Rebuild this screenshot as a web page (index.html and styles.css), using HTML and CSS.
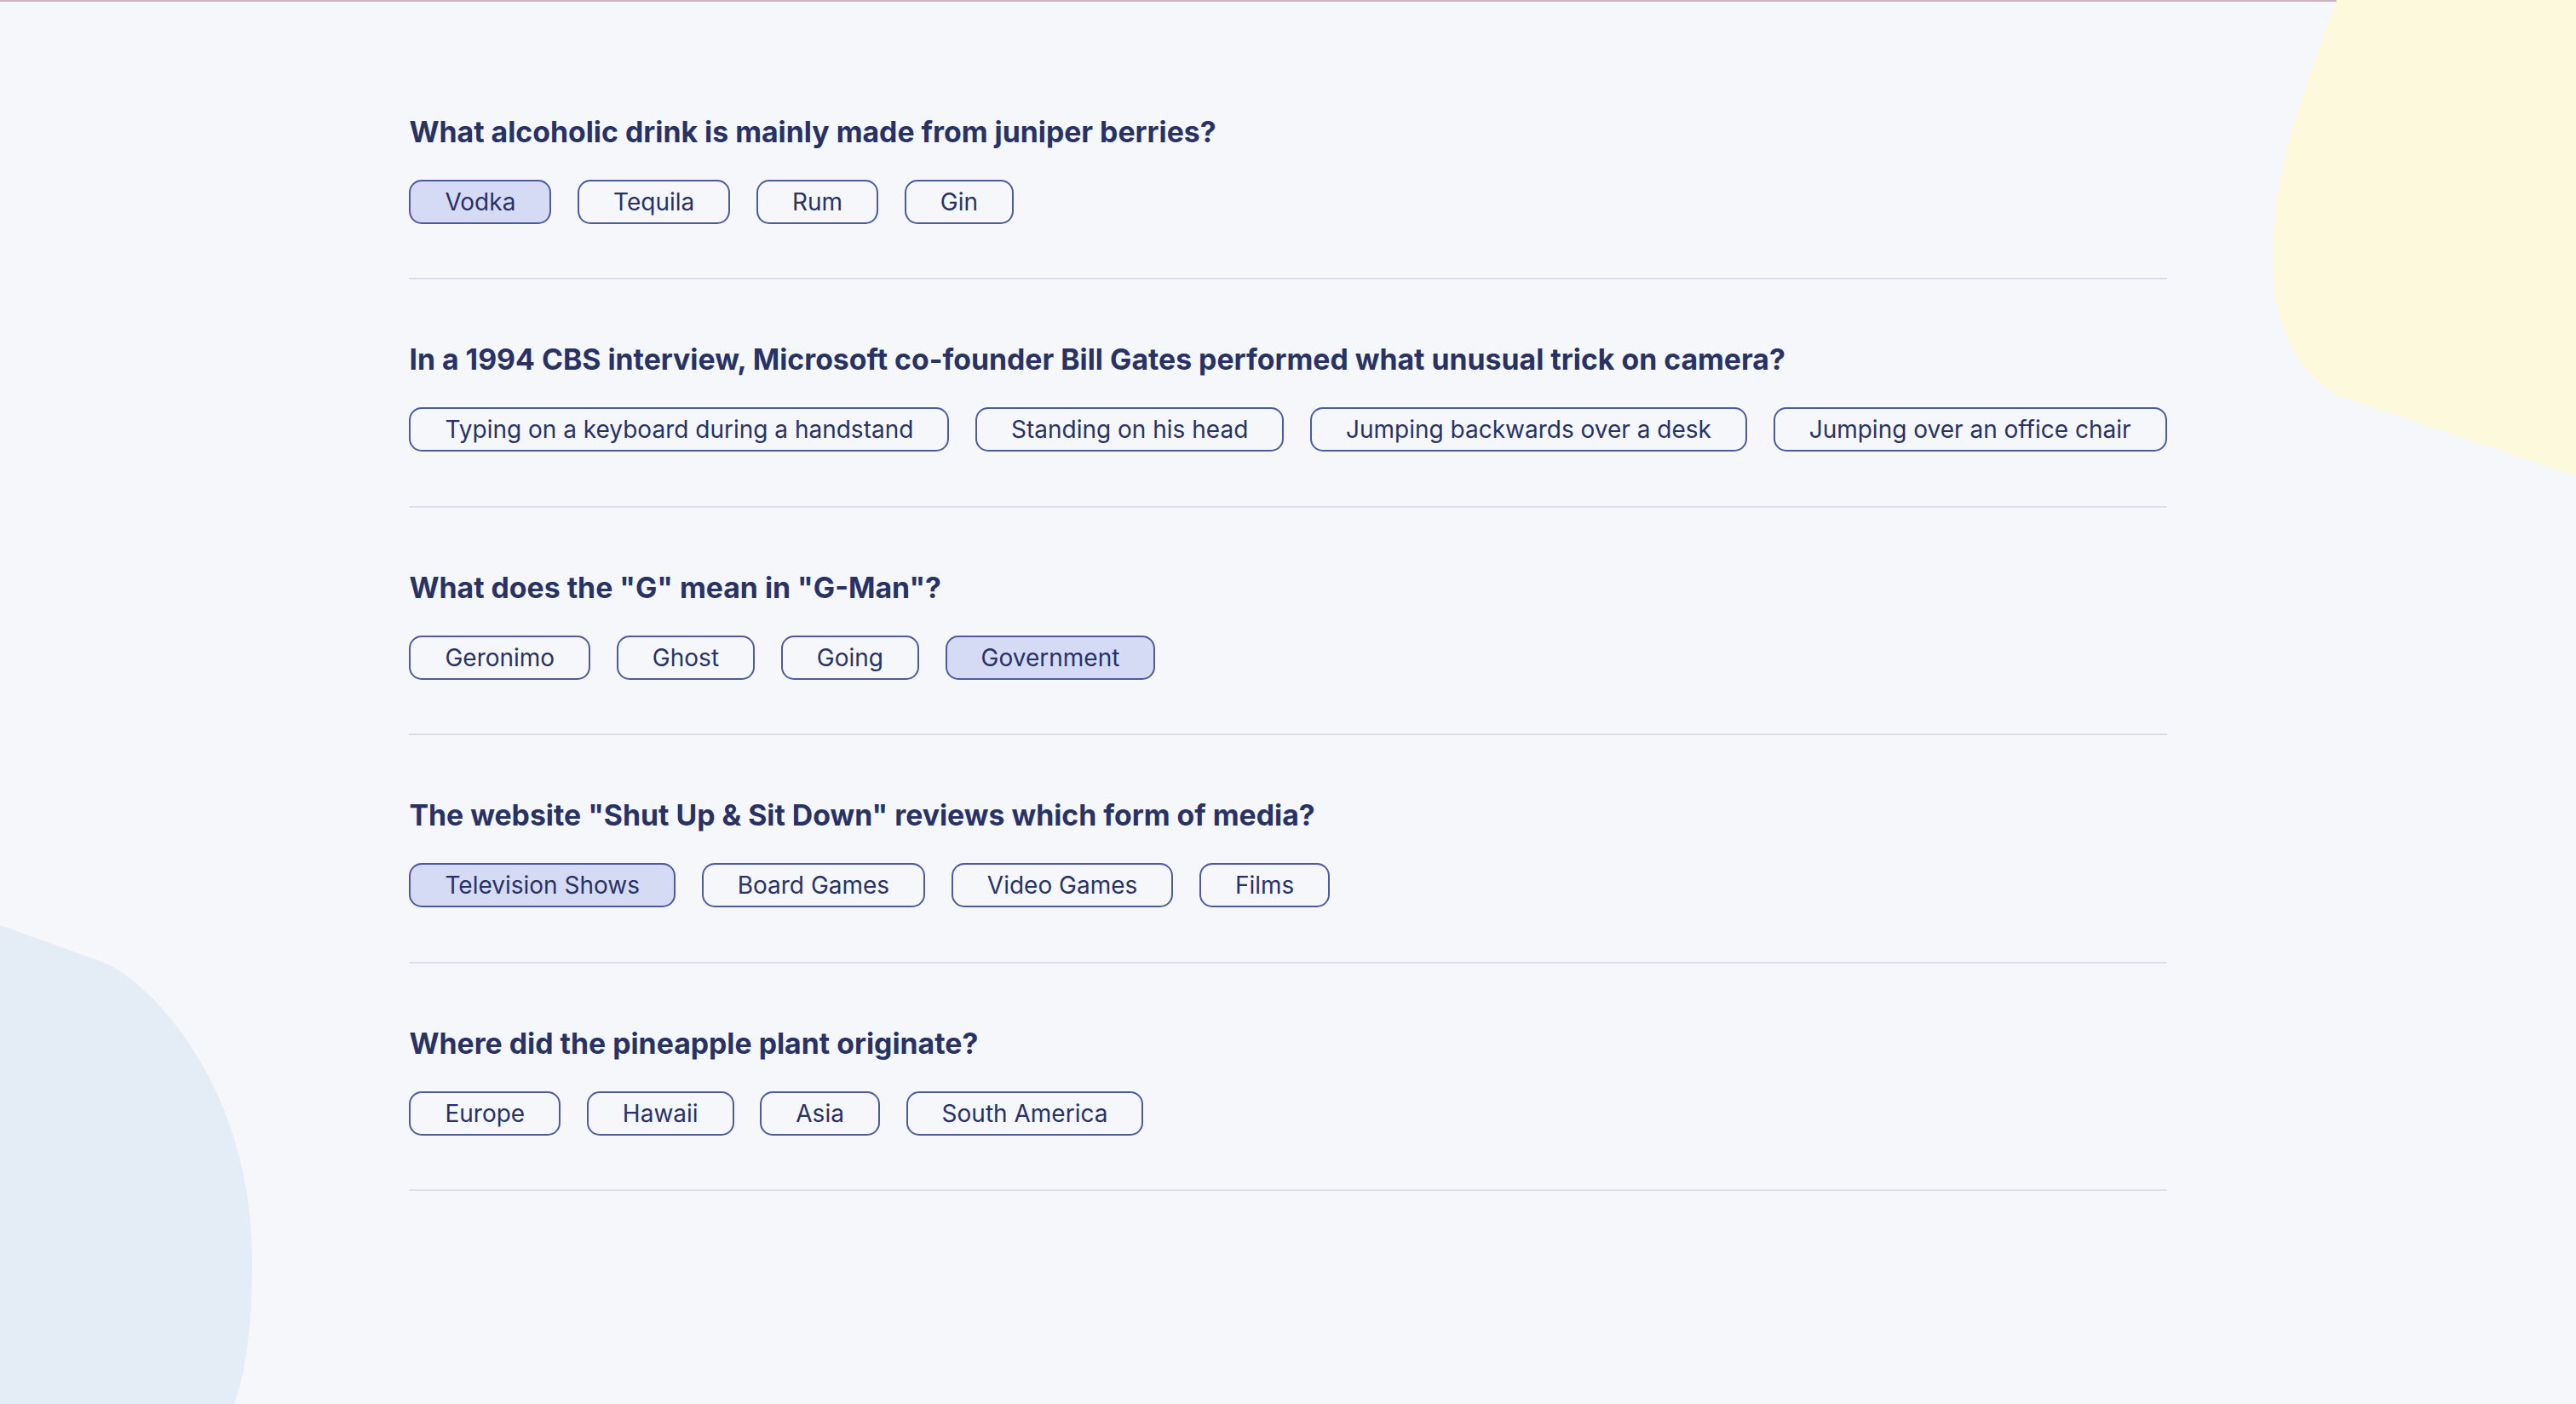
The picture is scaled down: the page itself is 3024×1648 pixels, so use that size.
FILE: index.html
```html
<!DOCTYPE html>
<html lang="en">
<head>
<meta charset="utf-8">
<title>Quizzical</title>
<link rel="stylesheet" href="styles.css">
</head>
<body>
<div class="topline"></div>
<svg class="blobs" width="3024" height="1648" viewBox="0 0 3024 1648" aria-hidden="true">
  <path class="blob-yellow" d="M2743,0 C2715,80 2668,190 2668,300 C2668,385 2700,450 2760,470 L3024,559 L3024,0 Z"/>
  <path class="blob-blue" d="M0,1086 L117,1128 C170,1145 296,1270 296,1480 C296,1560 288,1610 275,1648 L0,1648 Z"/>
</svg>
<main class="quiz">
  <section class="question">
    <h2>What alcoholic drink is mainly made from juniper berries?</h2>
    <div class="answers">
      <button class="answer selected">Vodka</button>
      <button class="answer">Tequila</button>
      <button class="answer">Rum</button>
      <button class="answer">Gin</button>
    </div>
  </section>
  <section class="question">
    <h2>In a 1994 CBS interview, Microsoft co-founder Bill Gates performed what unusual trick on camera?</h2>
    <div class="answers">
      <button class="answer">Typing on a keyboard during a handstand</button>
      <button class="answer">Standing on his head</button>
      <button class="answer">Jumping backwards over a desk</button>
      <button class="answer">Jumping over an office chair</button>
    </div>
  </section>
  <section class="question">
    <h2>What does the "G" mean in "G-Man"?</h2>
    <div class="answers">
      <button class="answer">Geronimo</button>
      <button class="answer">Ghost</button>
      <button class="answer">Going</button>
      <button class="answer selected">Government</button>
    </div>
  </section>
  <section class="question">
    <h2>The website "Shut Up &amp; Sit Down" reviews which form of media?</h2>
    <div class="answers">
      <button class="answer selected">Television Shows</button>
      <button class="answer">Board Games</button>
      <button class="answer">Video Games</button>
      <button class="answer">Films</button>
    </div>
  </section>
  <section class="question">
    <h2>Where did the pineapple plant originate?</h2>
    <div class="answers">
      <button class="answer">Europe</button>
      <button class="answer">Hawaii</button>
      <button class="answer">Asia</button>
      <button class="answer">South America</button>
    </div>
  </section>
</main>
</body>
</html>
```
FILE: styles.css
```css
html, body {
  margin: 0;
  padding: 0;
}
body {
  background: #f5f7fb;
  color: #293264;
  font-family: Inter, "Noto Sans", sans-serif;
  min-height: 100vh;
  overflow: hidden;
  position: relative;
}
.topline {
  height: 2px;
  background: #c9b4bf;
}
.blobs {
  position: absolute;
  top: 0;
  left: 0;
  z-index: 0;
}
.blob-yellow {
  fill: #fdf9dc;
}
.blob-blue {
  fill: #e4ecf6;
}
.quiz {
  position: relative;
  z-index: 1;
  width: fit-content;
  margin: 0 auto;
  padding-top: 59px;
}
.question {
  padding: 70px 0 63.4px;
  border-bottom: 2px solid #dbdef0;
}
.question h2 {
  margin: 0 0 32px;
  font-size: 33.8px;
  line-height: 48px;
  font-weight: 700;
  color: #293264;
}
.answers {
  display: flex;
  gap: 30.7px;
}
.answer {
  font-family: Inter, "Noto Sans", sans-serif;
  font-size: 28px;
  line-height: 40px;
  font-weight: 400;
  color: #293264;
  background: transparent;
  border: 2px solid #4d5b9e;
  border-radius: 15px;
  padding: 4px 40px;
  white-space: nowrap;
}
.answer.selected {
  background: #d6dbf5;
}
```
